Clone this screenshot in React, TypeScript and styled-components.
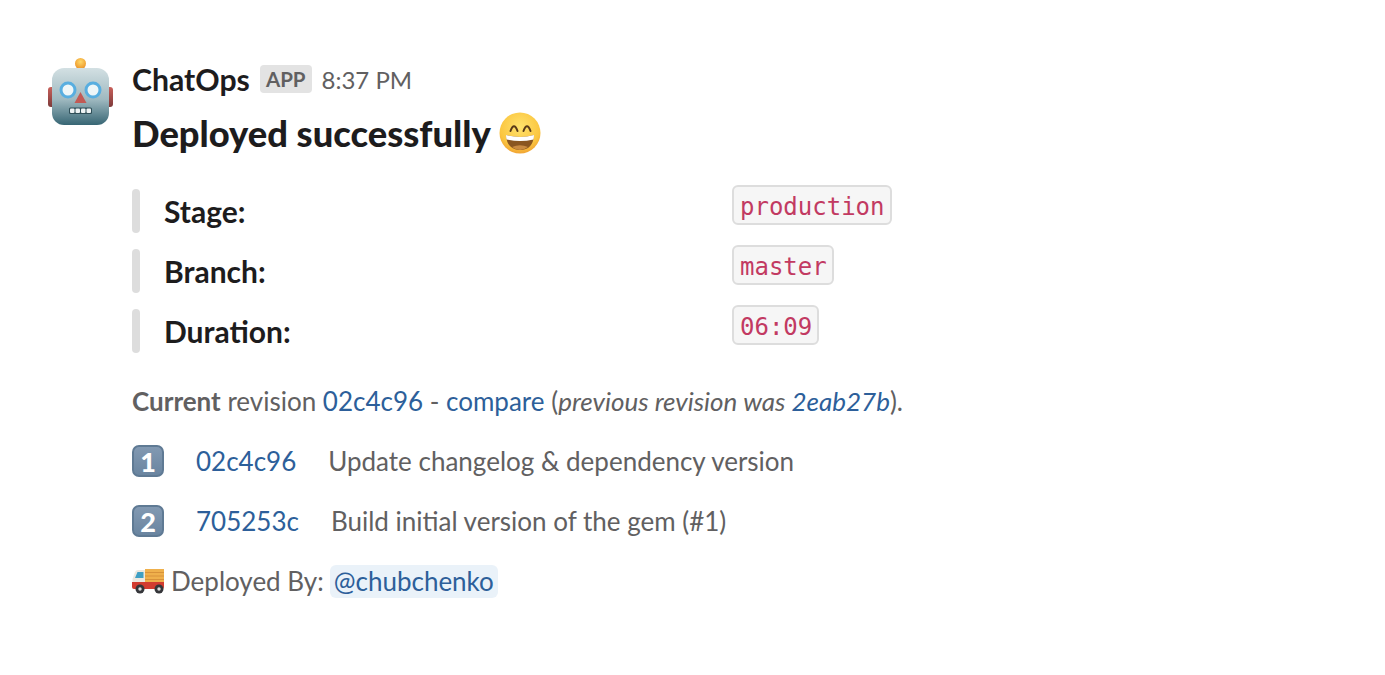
import React from "react";
import styled, { createGlobalStyle } from "styled-components";

const FIELDS = [
  { label: "Stage:", value: "production" },
  { label: "Branch:", value: "master" },
  { label: "Duration:", value: "06:09" },
];

const COMMITS = [
  { num: "1", sha: "02c4c96", text: "Update changelog & dependency version" },
  { num: "2", sha: "705253c", text: "Build initial version of the gem (#1)" },
];

const RobotIcon = () => (
  <svg width="66" height="70" viewBox="0 0 66 70" style={{ display: "block" }}>
    <defs>
      <linearGradient id="robotFace" x1="0" y1="0" x2="0" y2="1">
        <stop offset="0" stopColor="#d3e0e3" />
        <stop offset="0.55" stopColor="#9fb9c0" />
        <stop offset="1" stopColor="#376674" />
      </linearGradient>
      <radialGradient id="robotBulb" cx="0.5" cy="0.35" r="0.6">
        <stop offset="0" stopColor="#ffd96a" />
        <stop offset="1" stopColor="#ee9a2c" />
      </radialGradient>
      <linearGradient id="robotEar" x1="0" y1="0" x2="0" y2="1">
        <stop offset="0" stopColor="#c9605a" />
        <stop offset="1" stopColor="#7d3a3a" />
      </linearGradient>
    </defs>
    <rect x="0" y="30" width="10" height="20" rx="3" fill="url(#robotEar)" />
    <rect x="55" y="30" width="10" height="20" rx="3" fill="url(#robotEar)" />
    <path d="M25 15 Q26 10 32.5 10 Q39 10 40 15 Z" fill="#5f4a8c" />
    <circle cx="32.5" cy="6.5" r="5.5" fill="url(#robotBulb)" />
    <rect x="4" y="11" width="57" height="57" rx="12" fill="url(#robotFace)" />
    <circle cx="20" cy="33" r="7" fill="#eef6f8" stroke="#58aee0" strokeWidth="3" />
    <circle cx="45" cy="33" r="7" fill="#eef6f8" stroke="#58aee0" strokeWidth="3" />
    <path d="M32.5 35 L38.5 46 H26.5 Z" fill="#c25a55" />
    <rect x="21" y="50.5" width="23" height="6.5" rx="1.5" fill="#2f4f58" />
    <rect x="22" y="51.5" width="4.5" height="4.5" rx="1" fill="#eef3f4" />
    <rect x="27.5" y="51.5" width="4.5" height="4.5" rx="1" fill="#eef3f4" />
    <rect x="33" y="51.5" width="4.5" height="4.5" rx="1" fill="#eef3f4" />
    <rect x="38.5" y="51.5" width="4.5" height="4.5" rx="1" fill="#eef3f4" />
  </svg>
);

const GrinIcon = () => (
  <svg width="42" height="42" viewBox="0 0 42 42" style={{ display: "block" }}>
    <defs>
      <radialGradient id="grinFace" cx="0.5" cy="0.35" r="0.7">
        <stop offset="0" stopColor="#ffe26c" />
        <stop offset="0.7" stopColor="#fbc640" />
        <stop offset="1" stopColor="#ee9a30" />
      </radialGradient>
    </defs>
    <circle cx="21" cy="21" r="20.5" fill="url(#grinFace)" />
    <path d="M11.5 19 Q15 9.5 18.5 19" fill="none" stroke="#5a3a18" strokeWidth="2" strokeLinecap="round" />
    <path d="M24.5 19 Q28 9.5 31.5 19" fill="none" stroke="#5a3a18" strokeWidth="2" strokeLinecap="round" />
    <path d="M7 23 Q21 27 35 23 Q34 38 21 38 Q8 38 7 23 Z" fill="#8a5520" />
    <path d="M7 23 Q21 27 35 23 Q35 25.5 34.5 27.5 Q21 30.5 7.5 27.5 Q7 25.5 7 23 Z" fill="#ffffff" />
    <path d="M13 35 Q21 31.5 29 35 Q25 38 21 38 Q17 38 13 35 Z" fill="#c98a42" />
  </svg>
);

const TruckIcon = () => (
  <svg width="33" height="28" viewBox="0 0 33 28" style={{ display: "block" }}>
    <rect x="13" y="2" width="19" height="16" fill="#efb04c" />
    <path d="M13 5.5 H32 M13 9 H32 M13 12.5 H32" stroke="#d8923a" strokeWidth="1" />
    <path d="M13 3 H6 Q4 3 3 5 L0.5 12 V19 H13 Z" fill="#ece8df" />
    <path d="M5.5 5 H11.5 V11 H3 Z" fill="#3f9fc4" />
    <path d="M0 15 H32 V20 Q32 22 30 22 H2 Q0 22 0 20 Z" fill="#d23c30" />
    <circle cx="8" cy="22" r="4.5" fill="#35363a" />
    <circle cx="8" cy="22" r="1.7" fill="#d9d9d9" />
    <circle cx="27" cy="22" r="4.5" fill="#35363a" />
    <circle cx="27" cy="22" r="1.7" fill="#d9d9d9" />
  </svg>
);

const App: React.FC = () => (
  <>
    <GlobalStyle />
    <Page>
      <Avatar>
        <RobotIcon />
      </Avatar>
      <Content>
        <Header>
          <BotName>ChatOps</BotName>
          <AppBadge>APP</AppBadge>
          <Time>8:37 PM</Time>
        </Header>
        <Title>
          Deployed successfully <GrinIcon />
        </Title>
        <Fields>
          {FIELDS.map(({ label, value }) => (
            <FieldRow key={label}>
              <FieldLabel>{label}</FieldLabel>
              <Code>{value}</Code>
            </FieldRow>
          ))}
        </Fields>
        <Line>
          <strong>Current</strong> revision <Link>02c4c96</Link> - <Link>compare</Link> (
          <em>
            previous revision was <Link>2eab27b</Link>
          </em>
          ).
        </Line>
        {COMMITS.map(({ num, sha, text }) => (
          <CommitRow key={sha}>
            <Keycap>{num}</Keycap>
            <Link>{sha}</Link>
            <CommitText>{text}</CommitText>
          </CommitRow>
        ))}
        <DeployRow>
          <TruckIcon />
          <span>Deployed By:</span>
          <Mention>@chubchenko</Mention>
        </DeployRow>
      </Content>
    </Page>
  </>
);

const GlobalStyle = createGlobalStyle`
  html, body {
    margin: 0;
    padding: 0;
    background: #ffffff;
  }
  body {
    font-family: Lato, "Liberation Sans", sans-serif;
  }
`;

const Page = styled.div`
  display: flex;
  width: 1385px;
  height: 675px;
  box-sizing: border-box;
  padding: 57px 0 0 48px;
  overflow: hidden;
`;

const Avatar = styled.div`
  width: 84px;
  flex-shrink: 0;
`;

const Content = styled.div`
  display: flex;
  flex-direction: column;
  font-size: 26px;
  color: #616061;
`;

const Header = styled.div`
  display: flex;
  align-items: center;
  height: 44px;
  margin-bottom: 2px;
`;

const BotName = styled.span`
  font-size: 30.2px;
  font-weight: 700;
  color: #1d1c1d;
`;

const AppBadge = styled.span`
  margin-left: 10px;
  padding: 0 6px;
  height: 28px;
  line-height: 28px;
  border-radius: 4px;
  background: #e3e3e3;
  font-size: 20.5px;
  font-weight: 700;
  color: #616061;
`;

const Time = styled.span`
  margin-left: 10px;
  font-size: 24px;
  color: #616061;
`;

const Title = styled.div`
  display: flex;
  align-items: center;
  gap: 8px;
  height: 60px;
  font-size: 36.3px;
  font-weight: 900;
  color: #1d1c1d;
`;

const Fields = styled.div`
  display: flex;
  flex-direction: column;
  gap: 16px;
  margin-top: 22px;
`;

const FieldRow = styled.div`
  display: grid;
  grid-template-columns: 600px auto;
  justify-items: start;
  height: 44px;
`;

const FieldLabel = styled.div`
  display: flex;
  align-items: center;
  gap: 24px;
  height: 44px;
  margin-top: 4px;
  font-size: 30px;
  font-weight: 700;
  color: #1d1c1d;
  &::before {
    content: "";
    width: 8px;
    height: 44px;
    border-radius: 4px;
    background: #dddddd;
  }
`;

const Code = styled.code`
  box-sizing: border-box;
  height: 40px;
  line-height: 40px;
  padding: 0 5px 0 6px;
  border: 2px solid #dddddd;
  border-radius: 6px;
  background: #f6f6f6;
  font-family: "DejaVu Sans Mono", "Liberation Mono", monospace;
  font-size: 24px;
  color: #c23a62;
`;

const Line = styled.div`
  margin-top: 32px;
  line-height: 40px;
  strong {
    font-weight: 700;
  }
`;

const Link = styled.span`
  color: #2d5f9a;
`;

const CommitRow = styled.div`
  display: flex;
  align-items: center;
  height: 40px;
  margin-top: 20px;
`;

const Keycap = styled.span`
  display: flex;
  align-items: center;
  justify-content: center;
  box-sizing: border-box;
  width: 32px;
  height: 32px;
  margin-right: 32px;
  border: 2px solid #5f7a94;
  border-radius: 7px;
  background: linear-gradient(#8299b2, #6a85a0);
  font-size: 27px;
  font-weight: 900;
  color: #ffffff;
`;

const CommitText = styled.span`
  margin-left: 32px;
`;

const DeployRow = styled.div`
  display: flex;
  align-items: center;
  height: 40px;
  margin-top: 20px;
  gap: 6px;
`;

const Mention = styled.span`
  padding: 0 4px;
  height: 33px;
  line-height: 33px;
  border-radius: 6px;
  background: #eaf2f9;
  color: #2d5f9a;
`;

export default App;
